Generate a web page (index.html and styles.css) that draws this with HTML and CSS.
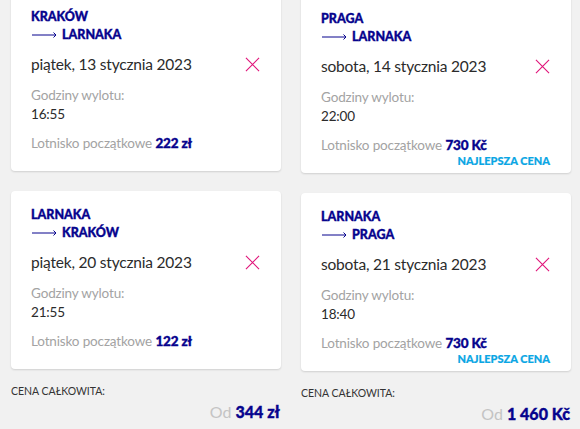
FILE: index.html
```html
<!DOCTYPE html>
<html lang="pl">
<head>
<meta charset="utf-8">
<title>Podsumowanie lotów</title>
<link rel="stylesheet" href="styles.css">
</head>
<body>
<main class="trips">
  <section class="trip">
    <article class="flight">
      <div class="route">
        <div class="city">KRAKÓW</div>
        <div class="city to"><svg class="arrow" viewBox="0 0 25 8" width="25" height="8"><path d="M0 4H24M21.5 1.5L24 4L21.5 6.5" fill="none" stroke="currentColor" stroke-width="1"/></svg>LARNAKA</div>
      </div>
      <div class="date-row">
        <span class="date">piątek, 13 stycznia 2023</span>
        <svg class="remove" viewBox="0 0 16 16" width="16" height="16"><path d="M1 1L15 15M15 1L1 15" stroke="currentColor" stroke-width="1.2"/></svg>
      </div>
      <div class="label">Godziny wylotu:</div>
      <div class="time">16:55</div>
      <div class="price">Lotnisko początkowe <b>222 zł</b></div>
      <div class="tag"></div>
    </article>
    <article class="flight">
      <div class="route">
        <div class="city">LARNAKA</div>
        <div class="city to"><svg class="arrow" viewBox="0 0 25 8" width="25" height="8"><path d="M0 4H24M21.5 1.5L24 4L21.5 6.5" fill="none" stroke="currentColor" stroke-width="1"/></svg>KRAKÓW</div>
      </div>
      <div class="date-row">
        <span class="date">piątek, 20 stycznia 2023</span>
        <svg class="remove" viewBox="0 0 16 16" width="16" height="16"><path d="M1 1L15 15M15 1L1 15" stroke="currentColor" stroke-width="1.2"/></svg>
      </div>
      <div class="label">Godziny wylotu:</div>
      <div class="time">21:55</div>
      <div class="price">Lotnisko początkowe <b>122 zł</b></div>
      <div class="tag"></div>
    </article>
    <div class="total">
      <div class="total-label">CENA CAŁKOWITA:</div>
      <div class="total-price"><span class="from">Od</span> <b>344 zł</b></div>
    </div>
  </section>

  <section class="trip alt">
    <article class="flight">
      <div class="route">
        <div class="city">PRAGA</div>
        <div class="city to"><svg class="arrow" viewBox="0 0 25 8" width="25" height="8"><path d="M0 4H24M21.5 1.5L24 4L21.5 6.5" fill="none" stroke="currentColor" stroke-width="1"/></svg>LARNAKA</div>
      </div>
      <div class="date-row">
        <span class="date">sobota, 14 stycznia 2023</span>
        <svg class="remove" viewBox="0 0 16 16" width="16" height="16"><path d="M1 1L15 15M15 1L1 15" stroke="currentColor" stroke-width="1.2"/></svg>
      </div>
      <div class="label">Godziny wylotu:</div>
      <div class="time">22:00</div>
      <div class="price">Lotnisko początkowe <b>730 Kč</b></div>
      <div class="tag">NAJLEPSZA CENA</div>
    </article>
    <article class="flight">
      <div class="route">
        <div class="city">LARNAKA</div>
        <div class="city to"><svg class="arrow" viewBox="0 0 25 8" width="25" height="8"><path d="M0 4H24M21.5 1.5L24 4L21.5 6.5" fill="none" stroke="currentColor" stroke-width="1"/></svg>PRAGA</div>
      </div>
      <div class="date-row">
        <span class="date">sobota, 21 stycznia 2023</span>
        <svg class="remove" viewBox="0 0 16 16" width="16" height="16"><path d="M1 1L15 15M15 1L1 15" stroke="currentColor" stroke-width="1.2"/></svg>
      </div>
      <div class="label">Godziny wylotu:</div>
      <div class="time">18:40</div>
      <div class="price">Lotnisko początkowe <b>730 Kč</b></div>
      <div class="tag">NAJLEPSZA CENA</div>
    </article>
    <div class="total">
      <div class="total-label">CENA CAŁKOWITA:</div>
      <div class="total-price"><span class="from">Od</span> <b>1 460 Kč</b></div>
    </div>
  </section>
</main>
</body>
</html>
```

FILE: styles.css
```css
html, body {
  margin: 0;
  background: #f1f1f1;
  overflow: hidden;
}

body {
  font-family: Lato, "Noto Sans", sans-serif;
  color: #2b2b2b;
}

/* two trip columns, page scrolled slightly past the top */
.trips {
  display: grid;
  grid-template-columns: 270px 270px;
  column-gap: 20px;
  padding-left: 11px;
  margin-top: -7px;
}

.trip {
  display: flex;
  flex-direction: column;
  gap: 20px;
}

.trip.alt {
  padding-top: 2px;
}

.flight {
  background: #fff;
  border-radius: 4px;
  box-shadow: 0 1px 2px rgba(0, 0, 0, 0.14);
  padding: 15px 21px 6px 20px;
}

/* heavy weight for route names and prices */
.city,
.price b,
.tag,
.total-price b {
  font-weight: 900;
  -webkit-text-stroke: 0.35px currentColor;
}

.city {
  font-size: 12.5px;
  line-height: 18px;
  color: #06038d;
  display: flex;
  align-items: center;
}

.arrow {
  color: #06038d;
  margin: 0 5px 0 1px;
  -webkit-text-stroke: 0;
}

.date-row {
  display: flex;
  justify-content: space-between;
  align-items: center;
  margin-top: 8px;
  height: 24px;
}

.date {
  font-size: 15.5px;
  letter-spacing: -0.2px;
  color: #2b2b2b;
}

.remove {
  color: #e0147a;
  width: 15px;
  height: 15px;
}

.label,
.time,
.price {
  font-size: 13.5px;
  line-height: 19px;
  letter-spacing: -0.15px;
}

.label {
  margin-top: 10px;
  color: #a3a3a3;
}

.time {
  color: #2b2b2b;
}

.price {
  margin-top: 10px;
  color: #a3a3a3;
}

.price b {
  color: #06038d;
}

.tag {
  height: 13px;
  font-size: 11px;
  line-height: 13px;
  color: #0ba6e4;
  text-align: right;
  margin-top: -1px;
  -webkit-text-stroke-width: 0.2px;
}

.total-label {
  font-size: 10.5px;
  line-height: 14px;
  color: #333;
  margin-top: -5px;
}

.total-price {
  text-align: right;
  font-size: 16px;
  line-height: 20px;
  margin-top: 4px;
  padding-right: 1px;
}

.total-price .from {
  color: #c4c4c4;
}

.total-price b {
  color: #06038d;
}
```
